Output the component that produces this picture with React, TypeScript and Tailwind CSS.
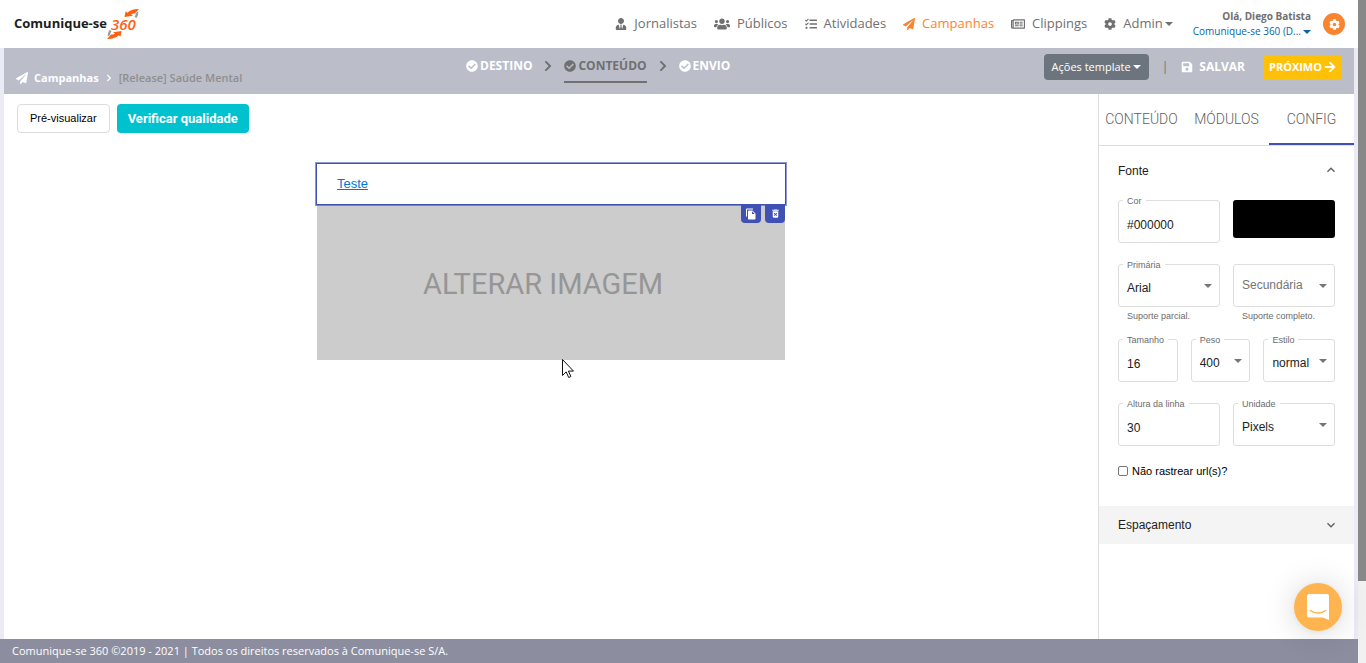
import React, { useState } from "react";
import {
  FaArrowRight,
  FaCheckCircle,
  FaChevronRight,
  FaCog,
  FaPaperPlane,
  FaRegNewspaper,
  FaSave,
  FaTasks,
  FaUsers,
  FaUserTie,
} from "react-icons/fa";
import { MdDeleteForever, MdFileCopy, MdKeyboardArrowDown, MdKeyboardArrowUp } from "react-icons/md";

const navItems = [
  { label: "Jornalistas", icon: <FaUserTie size={12} /> },
  { label: "Públicos", icon: <FaUsers size={16} /> },
  { label: "Atividades", icon: <FaTasks size={12} /> },
  { label: "Campanhas", icon: <FaPaperPlane size={12} />, active: true },
  { label: "Clippings", icon: <FaRegNewspaper size={14} /> },
  { label: "Admin", icon: <FaCog size={12} />, menu: true },
];

const steps = [
  { label: "DESTINO" },
  { label: "CONTEÚDO", current: true },
  { label: "ENVIO" },
];

function Caret({ className = "" }: { className?: string }) {
  return (
    <svg viewBox="0 0 8 4" className={`w-2 h-1 fill-current ${className}`} aria-hidden="true">
      <path d="M0 0h8L4 4z" />
    </svg>
  );
}

function LogoArrow() {
  return (
    <>
      <path d="M18.500 9l1-5.500 2 1.200C24 2 28 .8 33 1c-1.500 1.200-2.500 3-4 4.500-1.500-.2-3 .3-4 1l2 1.200z" fill="#ff5f0f" />
      <path d="M30 5l2.200-1.500c.3 2-.3 4.200-1.600 6.500L28.500 9c.8-1.300 1.400-2.600 1.500-4z" fill="#9b9b9b" />
    </>
  );
}

function Logo() {
  return (
    <a href="#" className="relative flex items-center h-8 text-[13px] font-bold text-[#1d1d1b]">
      <span>Comunique-se</span>
      <span className="ml-1 text-[15px] italic font-semibold text-[#ff5f0f]">360</span>
      <svg viewBox="0 0 34 32" className="absolute -right-1 top-0 w-[34px] h-8" aria-hidden="true">
        <LogoArrow />
        <g transform="rotate(180 17 16)">
          <LogoArrow />
        </g>
      </svg>
    </a>
  );
}

function Header() {
  return (
    <header className="h-12 bg-white flex items-center justify-between pl-[14px] pr-[13px]">
      <Logo />
      <div className="flex items-center">
        <nav className="flex items-center gap-[17px] text-[13px]">
          {navItems.map((item) => (
            <a
              key={item.label}
              href="#"
              className={`flex items-center gap-[7px] ${item.active ? "text-[#f98430]" : "text-[#707070]"}`}
            >
              {item.icon}
              <span className="flex items-center gap-[2px]">
                {item.label}
                {item.menu && <Caret />}
              </span>
            </a>
          ))}
        </nav>
        <div className="ml-5 text-right text-[10px] leading-[15px]">
          <div className="font-bold text-[#707070]">Olá, Diego Batista</div>
          <button className="flex items-center gap-[2px] text-[#0a64a8] cursor-pointer">
            Comunique-se 360 (D... <Caret />
          </button>
        </div>
        <button
          aria-label="Configurações"
          className="ml-3 w-[22px] h-[22px] rounded-full bg-[#f98430] text-white flex items-center justify-center cursor-pointer"
        >
          <FaCog size={11} />
        </button>
      </div>
    </header>
  );
}

function Toolbar() {
  return (
    <div className="h-[46px] bg-[#bbbdc9] flex items-start">
      <div className="w-1/3 pl-3 pt-[22px] flex items-center gap-[6px] text-[11px] leading-4 font-bold text-white">
        <FaPaperPlane size={12} />
        <a href="#">Campanhas</a>
        <FaChevronRight size={8} />
        <span className="font-semibold text-[#8f8f8f]">[Release] Saúde Mental</span>
      </div>

      <div className="pl-3 pt-[9px] flex items-start gap-[10px]">
        {steps.map((step, i) => (
          <React.Fragment key={step.label}>
            {i > 0 && <FaChevronRight size={12} className="mt-[3px] text-[#707070]" />}
            <a
              href="#"
              className={`flex items-center gap-[2px] pb-[6px] text-xs leading-[18px] font-bold border-b-2 ${
                step.current ? "text-[#707070] border-[#707070]" : "text-white border-transparent"
              }`}
            >
              <FaCheckCircle size={12} />
              {step.label}
            </a>
          </React.Fragment>
        ))}
      </div>

      <div className="ml-auto pr-3 pt-[6px] flex items-center text-xs">
        <button className="h-[26px] px-2 rounded-sm bg-[#6c757d] text-white text-[11px] flex items-center gap-[2px] cursor-pointer">
          Ações template <Caret />
        </button>
        <span className="mx-[13px] text-[#707070]">|</span>
        <button className="flex items-center gap-[6px] font-bold text-white cursor-pointer">
          <FaSave size={12} /> SALVAR
        </button>
        <button className="ml-[18px] h-[25px] px-[6px] rounded-sm bg-[#ffc107] text-white text-[11px] font-bold flex items-center gap-[2px] cursor-pointer">
          PRÓXIMO <FaArrowRight size={12} />
        </button>
      </div>
    </div>
  );
}

function Canvas() {
  return (
    <main className="flex-1 min-w-0 px-[13px] pt-[10px] font-['Liberation_Sans',Arial,sans-serif]">
      <div className="flex items-center gap-[7px]">
        <button className="h-[29px] px-3 rounded-sm border border-[#dddddd] bg-white text-[11px] text-black cursor-pointer">
          Pré-visualizar
        </button>
        <button className="h-[29px] px-[11px] rounded-sm bg-[#00c2cf] text-white font-bold text-[13px] font-[Roboto,sans-serif] cursor-pointer">
          Verificar qualidade
        </button>
      </div>

      <div className="relative w-[470px] mx-auto mt-[30px]">
        <div className="relative h-[42px] px-5 border border-[#3f51b5] ring-1 ring-[#3f51b5]/60 bg-white flex items-center z-10">
          <a href="#" className="text-[13px] text-[#0078d7] underline">
            Teste
          </a>
          <div className="absolute right-0 top-full flex gap-1">
            <button
              aria-label="Duplicar"
              className="w-5 h-[19px] rounded-b-sm bg-[#3f51b5] text-white flex items-center justify-center cursor-pointer"
            >
              <MdFileCopy size={12} />
            </button>
            <button
              aria-label="Excluir"
              className="w-5 h-[19px] rounded-b-sm bg-[#3f51b5] text-white flex items-center justify-center cursor-pointer"
            >
              <MdDeleteForever size={11} />
            </button>
          </div>
        </div>
        <div className="mx-px h-[155px] pr-4 pt-1 bg-[#cccccc] text-[#969696] flex items-center justify-center text-[29px] font-[Roboto,sans-serif]">
          ALTERAR IMAGEM
        </div>
        <svg viewBox="0 0 12 19" className="absolute left-[246px] top-[196px] w-3 h-[19px] z-10" aria-hidden="true">
          <path d="M.5.5v16l3.700-3.600 2.500 5.600 2.200-1-2.500-5.400h5.100z" fill="#fff" stroke="#111" />
        </svg>
      </div>
    </main>
  );
}

const boxStyle = "w-full h-[43px] rounded-[3px] border border-[#dedede] bg-white pl-2 text-xs text-[#212121]";

function FieldLabel({ id, children }: { id: string; children: React.ReactNode }) {
  return (
    <label htmlFor={id} className="absolute left-[5px] -top-1 px-1 bg-white text-[9px] leading-[10px] text-[#6b6b6b]">
      {children}
    </label>
  );
}

function TextField({ id, label, value }: { id: string; label: string; value: string }) {
  const [text, setText] = useState(value);
  return (
    <div className="relative">
      <input id={id} value={text} onChange={(e) => setText(e.target.value)} className={`${boxStyle} pt-[6px]`} />
      <FieldLabel id={id}>{label}</FieldLabel>
    </div>
  );
}

interface SelectFieldProps {
  id: string;
  label: string;
  value?: string;
  helper?: string;
}

function SelectField({ id, label, value, helper }: SelectFieldProps) {
  return (
    <div>
      <div className="relative">
        <select
          id={id}
          aria-label={label}
          className={`${boxStyle} appearance-none ${value ? "pt-1" : "pb-[2px] text-[#757575]"}`}
        >
          <option>{value || label}</option>
        </select>
        {value && <FieldLabel id={id}>{label}</FieldLabel>}
        <Caret className="absolute right-2 top-5 text-[#757575] pointer-events-none" />
      </div>
      {helper && <p className="pl-[9px] pt-1 text-[9px] leading-[10px] text-[#6b6b6b]">{helper}</p>}
    </div>
  );
}

function Sidebar() {
  const [tab, setTab] = useState("CONFIG");

  return (
    <aside className="w-64 shrink-0 border-l border-[#dedede] font-['Liberation_Sans',Arial,sans-serif] text-[#212121]">
      <div className="flex h-[52px] border-b border-[#dedede] font-[Roboto,sans-serif] font-light text-sm text-[#616161]">
        {["CONTEÚDO", "MÓDULOS", "CONFIG"].map((name) => (
          <button
            key={name}
            onClick={() => setTab(name)}
            className={`flex-1 min-w-0 flex items-center justify-center border-b-2 cursor-pointer ${
              tab === name ? "border-[#3f51b5]" : "border-transparent"
            }`}
          >
            {name}
          </button>
        ))}
      </div>

      <section className="px-[19px] pt-4 pb-[27px]">
        <button className="w-full flex items-start justify-between text-xs leading-[18px] cursor-pointer">
          Fonte <MdKeyboardArrowUp size={16} className="-mr-1 text-[#616161]" />
        </button>
        <div className="mt-5 grid grid-cols-2 gap-[13px]">
          <TextField id="cor" label="Cor" value="#000000" />
          <button aria-label="Escolher cor" className="h-[38px] rounded-[3px] bg-black cursor-pointer" />
        </div>
        <div className="mt-[21px] grid grid-cols-2 gap-[13px]">
          <SelectField id="primaria" label="Primária" value="Arial" helper="Suporte parcial." />
          <SelectField id="secundaria" label="Secundária" helper="Suporte completo." />
        </div>
        <div className="mt-[18px] grid grid-cols-[5fr_5fr_6fr] gap-[13px]">
          <TextField id="tamanho" label="Tamanho" value="16" />
          <SelectField id="peso" label="Peso" value="400" />
          <SelectField id="estilo" label="Estilo" value="normal" />
        </div>
        <div className="mt-[21px] grid grid-cols-2 gap-[13px]">
          <TextField id="altura" label="Altura da linha" value="30" />
          <SelectField id="unidade" label="Unidade" value="Pixels" />
        </div>
        <label className="mt-[17px] flex items-center gap-1 text-[11px] leading-4 text-black">
          <input
            type="checkbox"
            className="appearance-none w-[10px] h-[10px] rounded-xs border border-[#767676] bg-white checked:bg-[#3f51b5]"
          />
          Não rastrear url(s)?
        </label>
      </section>

      <button className="w-full h-[38px] px-[19px] bg-[#f4f4f4] flex items-center justify-between text-xs cursor-pointer">
        Espaçamento <MdKeyboardArrowDown size={16} className="-mr-1 text-[#616161]" />
      </button>
    </aside>
  );
}

function ChatLauncher() {
  return (
    <button
      aria-label="Abrir chat"
      className="fixed right-6 bottom-8 w-12 h-12 rounded-full bg-[#ffb450] shadow-[0_1px_6px_rgba(0,0,0,0.06),0_2px_32px_rgba(0,0,0,0.16)] flex items-center justify-center z-20 cursor-pointer"
    >
      <svg viewBox="0 0 22 26" className="w-[22px] h-[26px]" aria-hidden="true">
        <path d="M2 0h18q2 0 2 2v24l-6-2.500H2q-2 0-2-2V2q0-2 2-2z" fill="#fff" />
        <path d="M3.500 16.500c4 3.300 11 3.300 15 0" fill="none" stroke="#ffb450" strokeWidth="1.500" strokeLinecap="round" />
      </svg>
    </button>
  );
}

export default function App() {
  return (
    <div className="min-h-screen flex bg-[#ebebf5] font-['Open_Sans',sans-serif]">
      <div className="flex-1 min-w-0 flex flex-col">
        <Header />
        <div className="flex-1 mx-1 flex flex-col bg-white">
          <Toolbar />
          <div className="flex-1 flex">
            <Canvas />
            <Sidebar />
          </div>
        </div>
        <footer className="h-6 px-3 bg-[#8c8ea0] text-white text-[11px] flex items-center">
          Comunique-se 360 ©2019 - 2021 | Todos os direitos reservados à Comunique-se S/A.
        </footer>
      </div>

      {/* page scroll track */}
      <div className="w-2 bg-[#f1f1f1]">
        <div className="h-[581px] bg-[#888888]" />
      </div>
      <ChatLauncher />
    </div>
  );
}
